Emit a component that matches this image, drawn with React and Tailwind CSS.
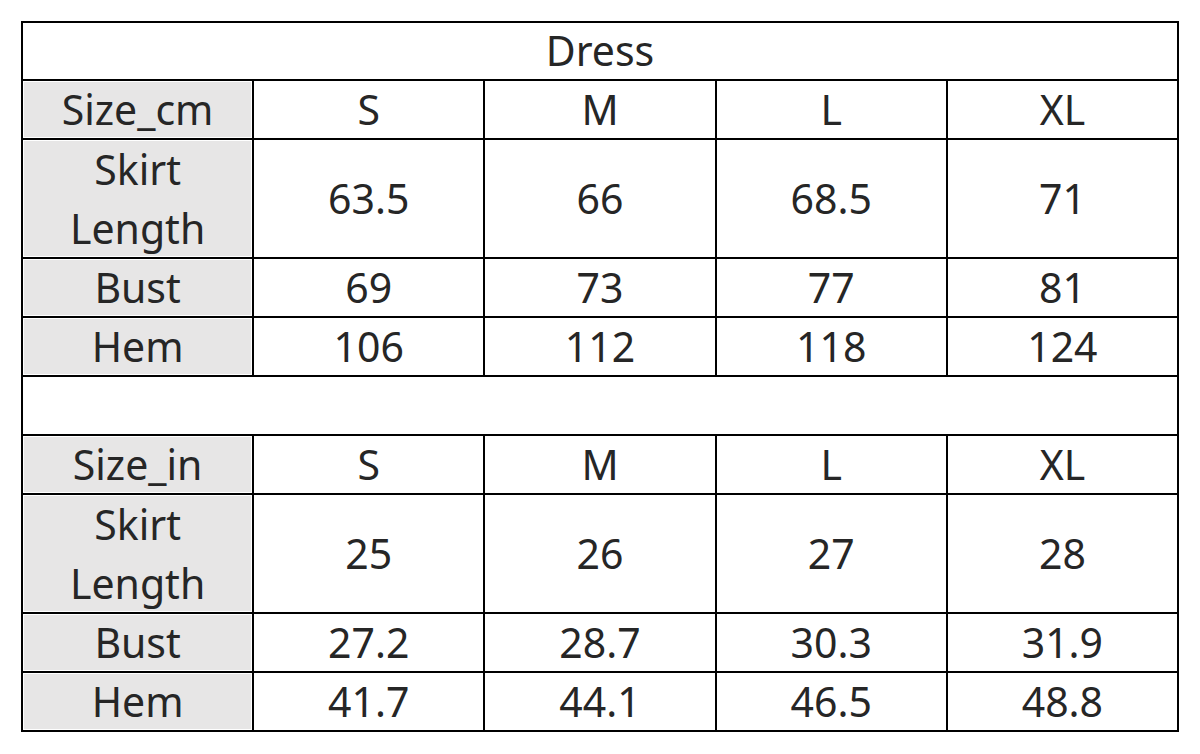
const headers = ["S", "M", "L", "XL"];

const cmRows = [
  { label: ["Skirt", "Length"], values: ["63.5", "66", "68.5", "71"] },
  { label: ["Bust"], values: ["69", "73", "77", "81"] },
  { label: ["Hem"], values: ["106", "112", "118", "124"] },
];

const inRows = [
  { label: ["Skirt", "Length"], values: ["25", "26", "27", "28"] },
  { label: ["Bust"], values: ["27.2", "28.7", "30.3", "31.9"] },
  { label: ["Hem"], values: ["41.7", "44.1", "46.5", "48.8"] },
];

function LabelCell({ lines, tall }) {
  return (
    <div
      className={`bg-[#e7e6e6] shadow-[inset_0_0_0_1px_#ffffff] flex flex-col items-center justify-center leading-[59px] ${tall ? "h-[117px]" : "h-[57px]"}`}
    >
      {lines.map((l) => (
        <span key={l}>{l}</span>
      ))}
    </div>
  );
}

function ValueCell({ children, tall }) {
  return (
    <div
      className={`bg-white flex items-center justify-center ${tall ? "h-[117px]" : "h-[57px]"}`}
    >
      {children}
    </div>
  );
}

function Block({ unit, rows }) {
  return (
    <>
      <LabelCell lines={[`Size_${unit}`]} />
      {headers.map((h) => (
        <ValueCell key={h}>{h}</ValueCell>
      ))}
      {rows.map((r) => {
        const tall = r.label.length > 1;
        return (
          <div key={r.label.join()} className="contents">
            <LabelCell lines={r.label} tall={tall} />
            {r.values.map((v, i) => (
              <ValueCell key={i} tall={tall}>
                {v}
              </ValueCell>
            ))}
          </div>
        );
      })}
    </>
  );
}

export default function App() {
  return (
    <div className="w-[1200px] h-[754px] bg-white pt-[21px] pl-[21px] font-['Noto_Sans',sans-serif] text-[41px] text-[#262626]">
      <div className="w-[1158px] bg-black p-[2px] grid grid-cols-5 gap-[2px]">
        <div className="col-span-5 h-[56px] bg-white flex items-center justify-center">
          Dress
        </div>
        <Block unit="cm" rows={cmRows} />
        <div className="col-span-5 h-[57px] bg-white" />
        <Block unit="in" rows={inRows} />
      </div>
    </div>
  );
}
